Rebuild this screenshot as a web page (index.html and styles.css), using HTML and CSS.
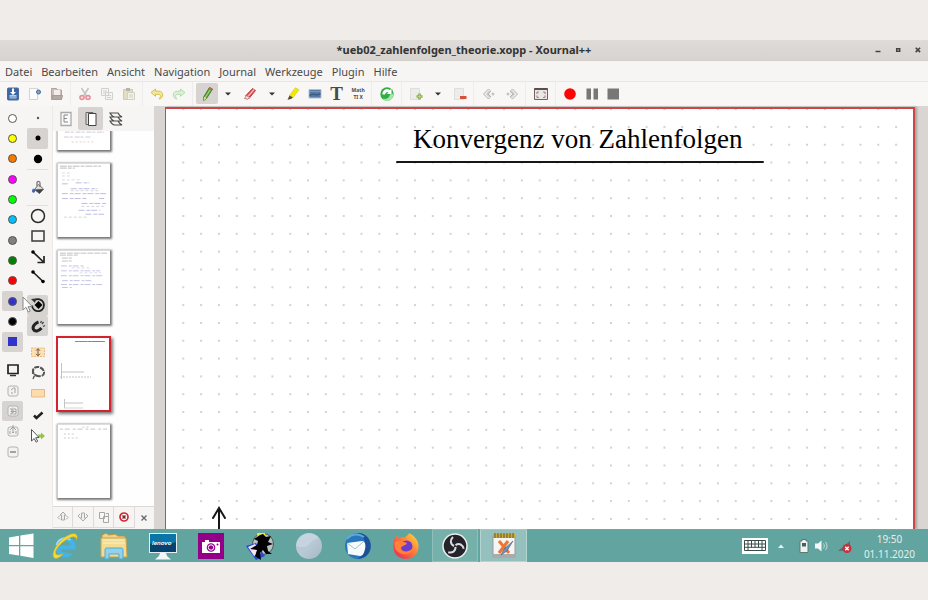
FILE: index.html
```html
<!DOCTYPE html>
<html lang="de">
<head>
<meta charset="utf-8">
<title>ueb02_zahlenfolgen_theorie.xopp - Xournal++</title>
<link rel="stylesheet" href="styles.css">
</head>
<body>
<main class="desktop">
<section class="window">
  <header class="titlebar">
    <h2 class="title">*ueb02_zahlenfolgen_theorie.xopp - Xournal++</h2>
    <div class="winbtns">
      <button aria-label="Minimieren"><svg width="8" height="8"><path d="M1.500 5.500h5" stroke="#444" stroke-width="1.500"/></svg></button>
      <button aria-label="Maximieren"><svg width="8" height="8"><path d="M2.700 2.700h3v2.600h-3z" fill="none" stroke="#444" stroke-width="1.500"/></svg></button>
      <button aria-label="Schließen"><svg width="8" height="8"><path d="M1.700 1.700l4.400 4.400M6.100 1.700L1.700 6.100" stroke="#444" stroke-width="1.600"/></svg></button>
    </div>
  </header>
  <nav class="menubar">
    <button>Datei</button><button>Bearbeiten</button><button>Ansicht</button><button>Navigation</button><button>Journal</button><button>Werkzeuge</button><button>Plugin</button><button>Hilfe</button>
  </nav>
  <div class="toolbar">
    <div class="group g3">
      <button aria-label="Speichern"><svg width="16" height="16"><rect x="2.500" y="2" width="11" height="12" rx="1" fill="#3b66a8" stroke="#4a6b9f"/><path d="M4.500 9h7v3.500h-7z" fill="#b9cbe5"/><path d="M7 2.500h2V6h2L8 9 5 6h2z" fill="#fff"/><path d="M4.500 11h7" stroke="#6d8fc0"/></svg></button>
      <button aria-label="Neu"><svg width="16" height="16"><path d="M2.500 2.500h8v11h-8z" fill="#fdfdfd" stroke="#d3d3d1"/><circle cx="11.500" cy="6" r="2" fill="#7ea3cb" stroke="#456a95"/></svg></button>
      <button aria-label="Öffnen"><svg width="16" height="16"><path d="M2.500 13.500v-11h5l1 1.500h4v9.500z" fill="#d2bdb0" stroke="#b8a196"/><path d="M5 4h6v5H5z" fill="#eee"/><path d="M3.500 9.500h10l-1 4H3z" fill="#b5aaa3" stroke="#a89b93"/></svg></button>
    </div>
    <div class="group g3">
      <button aria-label="Ausschneiden"><svg width="16" height="16"><path d="M4.500 2l5 8M11.500 2l-5 8" stroke="#c4c4c4" stroke-width="1.500"/><g fill="none" stroke="#e8919a" stroke-width="1.700"><ellipse cx="5" cy="11.500" rx="2" ry="1.800"/><ellipse cx="11" cy="11.500" rx="2" ry="1.800"/></g></svg></button>
      <button aria-label="Kopieren"><svg width="16" height="16" fill="#f4f4f3" stroke="#d0d0ce"><path d="M2.500 2.500h7v7h-7zM6.500 6.500h7v7h-7z"/><path d="M4 5h4M4 7h2M8 9.500h4M8 11.500h4"/></svg></button>
      <button aria-label="Einfügen"><svg width="16" height="16"><path d="M2.500 3.500h9v10h-9z" fill="#e2ddc4" stroke="#d0cab2"/><path d="M5 2h4v3H5z" fill="#b5b5b0"/><path d="M6.500 6.500h7v7h-7z" fill="#f2f3ec" stroke="#cdd3bf"/><path d="M8 9h4M8 11h4" stroke="#cbd3bd"/></svg></button>
    </div>
    <div class="group g2">
      <button aria-label="Rückgängig"><svg width="16" height="16"><path d="M2 6.500L6.500 3v2.200H10c5 0 5 7.300 0 7.800 2-2 2-4.600-.500-4.700h-3v2z" fill="#f7e98f" stroke="#d9bd50"/></svg></button>
      <button aria-label="Wiederholen"><svg width="16" height="16"><path d="M14 6.500L9.500 3v2.200H6c-5 0-5 7.300 0 7.800-2-2-2-4.600.500-4.700h3v2z" fill="#dcf0d6" stroke="#b4dbad"/></svg></button>
    </div>
    <div class="group g8">
      <button class="on" aria-label="Stift"><svg width="16" height="16"><path d="M10.500 1.500l3 1.500-6 9.500-3 2 .300-3.700z" fill="#62ad3e" stroke="#417d2a"/><path d="M12 2.500L6 12" stroke="#a6db85"/><path d="M5 10.700l2.500 1.500-3 2.300z" fill="#efd2a5"/><path d="M10.500 1.500l3 1.500-1 1.500-3-1.500z" fill="#d95d50"/></svg></button>
      <button aria-label="Stiftoptionen"><svg width="16" height="16"><path d="M5 6.500h6L8 9.500z" fill="#333"/></svg></button>
      <button aria-label="Radierer"><svg width="16" height="16"><path d="M10.500 2.500l3 2-6.500 8-3.500-2.500z" fill="#d94444" stroke="#bf4444"/><path d="M12 3.500l-7 8" stroke="#f6b4b4" stroke-width="1.500"/><path d="M4.500 9.500l3 2-1.500 1.700-3.500-.700z" fill="#eee" stroke="#c77"/></svg></button>
      <button aria-label="Radiereroptionen"><svg width="16" height="16"><path d="M5 6.500h6L8 9.500z" fill="#333"/></svg></button>
      <button aria-label="Textmarker"><svg width="16" height="16"><path d="M10.500 1.800l3.300 2L8 11.500 4.500 9.500z" fill="#f5e900" stroke="#e2d51e"/><path d="M4.500 9.500L8 11.500l-2 1.600-3.500.700z" fill="#554e32"/></svg></button>
      <button aria-label="Bild"><svg width="16" height="16"><path d="M2 3.500h12v8.500H2z" fill="#5578a5" stroke="#b4c0cf"/><path d="M2.500 9.500c4-3 7 1 11-2" stroke="#3d5c85" fill="none" stroke-width="1.500"/><path d="M3 5.500h10" stroke="#7795bc"/></svg></button>
      <button aria-label="Text" class="tglyph">T</button>
      <button aria-label="LaTeX" class="texglyph"><span>Math</span><span>TI X</span></button>
    </div>
    <div class="group g1">
      <button aria-label="Aktualisieren"><svg width="16" height="16"><circle cx="8" cy="8" r="6.700" fill="#2fae45"/><path d="M3.500 8.500a4.500 4.500 0 017-4.500L12.500 3v5H8L9.500 6A3 3 0 006 8.500z" fill="#fff"/><path d="M13.700 7.500a5.500 5.500 0 01-9.700 5c4 1.500 6.500-1 7-4z" fill="#a5e6aa"/></svg></button>
    </div>
    <div class="group gp">
      <button aria-label="Seite einfügen"><svg width="16" height="16"><path d="M2.500 2.500h9v11h-9z" fill="#ececeb" stroke="#dededc"/><path d="M11.500 7.500v6M8.500 10.500h6" stroke="#86a94f" stroke-width="2.600"/><path d="M11.500 8.500v4M9.500 10.500h4" stroke="#b9d57d"/></svg></button>
      <button aria-label="Seitenoptionen"><svg width="16" height="16"><path d="M5 6.500h6L8 9.500z" fill="#333"/></svg></button>
      <button aria-label="Seite löschen"><svg width="16" height="16"><path d="M2.500 2.500h9v11h-9z" fill="#ececeb" stroke="#dededc"/><path d="M8 11.500h6.500" stroke="#d6503c" stroke-width="3"/></svg></button>
    </div>
    <div class="group gn">
      <button aria-label="Zurück"><svg width="16" height="16"><path d="M7.500 3l-5 5 5 5 1.500-1.500L5.700 8 9 4.500zM10 5L7 8l3 3" fill="#eee" stroke="#b5b4b2"/><circle cx="12" cy="8" r="1" fill="#eee" stroke="#b5b4b2"/></svg></button>
      <button aria-label="Vor"><svg width="16" height="16"><path d="M8.500 3l5 5-5 5L7 11.500 10.300 8 7 4.500zM6 5l3 3-3 3" fill="#eee" stroke="#b5b4b2"/><circle cx="4" cy="8" r="1" fill="#eee" stroke="#b5b4b2"/></svg></button>
    </div>
    <div class="group g1">
      <button aria-label="Vollbild"><svg width="16" height="16"><path d="M1.500 2.500h13v11h-13z" fill="#eae7e4" stroke="#6c6663"/><path d="M1.500 3h13" stroke="#554f4d" stroke-width="2"/><path d="M4 6h2M4 6v2M10 6h2M12 6v2M4 11.500V9.500M4 11.500h2M12 11.500V9.500M12 11.500h-2" stroke="#b5837e" stroke-width="1.200"/></svg></button>
    </div>
    <div class="group gr">
      <button aria-label="Aufnehmen"><svg width="16" height="16"><circle cx="8" cy="8" r="5.800" fill="#fb0505"/></svg></button>
      <button aria-label="Pause"><svg width="16" height="16"><path d="M2.500 2.500H7v11H2.500zM9.500 2.500H14v11H9.500z" fill="#777"/></svg></button>
      <button aria-label="Stopp"><svg width="16" height="16"><path d="M2.500 2.500h11.500v11H2.500z" fill="#777"/></svg></button>
    </div>
  </div>
  <div class="workspace">
    <div class="rail">
      <div class="stack r12">
        <button class="sw white" aria-label="Weiß"><i></i></button>
        <button class="sw yellow" aria-label="Gelb"><i></i></button>
        <button class="sw orange" aria-label="Orange"><i></i></button>
        <button class="sw magenta" aria-label="Magenta"><i></i></button>
        <button class="sw lime" aria-label="Hellgrün"><i></i></button>
        <button class="sw sky" aria-label="Hellblau"><i></i></button>
        <button class="sw gray" aria-label="Grau"><i></i></button>
        <button class="sw green" aria-label="Grün"><i></i></button>
        <button class="sw red" aria-label="Rot"><i></i></button>
        <button class="sw blue on" aria-label="Blau"><i></i></button>
        <button class="sw black" aria-label="Schwarz"><i></i></button>
        <button class="sw blue square on" aria-label="Farbe wählen"><i></i></button>
      </div>
      <div class="stack r5">
        <button aria-label="Bildschirm"><svg width="16" height="16"><path d="M3 3h10v8.500H3z" fill="#f4f4f3" stroke="#222" stroke-width="1.700"/><path d="M5 13.500h6" stroke="#333" stroke-width="1.500"/></svg></button>
        <button aria-label="Seite 1"><svg class="faint" width="16" height="16"><rect x="3" y="3" width="10" height="10" rx="2"/><path d="M6 7l2.500-2H10v5M6 10h2"/></svg></button>
        <button class="on" aria-label="Doppelseite"><svg class="faint" width="16" height="16"><rect x="3" y="3" width="10" height="10" rx="2"/><path d="M5 6h2v5H5M9 6h2v5H9M8 4.500v7M5.500 8.500H11"/></svg></button>
        <button aria-label="Anordnung"><svg class="faint" width="16" height="16"><rect x="3" y="4" width="10" height="9" rx="2"/><path d="M8 2v8M5 7l3-3 3 3M5 8v3M11 8v3M7 9.500h2"/></svg></button>
        <button aria-label="Zeile"><svg class="faint" width="16" height="16"><rect x="3" y="3" width="10" height="10" rx="2"/><path d="M5 8h6" stroke-width="2"/></svg></button>
      </div>
    </div>
    <div class="rail tools">
      <div class="stack r3">
        <button aria-label="Fein"><svg width="16" height="16"><circle cx="8" cy="8" r="1.200" fill="#555"/></svg></button>
        <button class="on" aria-label="Mittel"><svg width="16" height="16"><circle cx="8" cy="8" r="2.500"/></svg></button>
        <button aria-label="Dick"><svg width="16" height="16"><circle cx="8" cy="8" r="4.200"/></svg></button>
      </div>
      <div class="stack fillbox">
        <button aria-label="Füllen"><svg width="16" height="16"><path d="M8.500 4.500l5 4.500-4 4.500-5-4z" fill="#ddd" stroke="#666"/><path d="M4.500 9.500l9-.500-4 4.500z" fill="#444"/><path d="M7 6V3c0-2.500 3-2 3 0v4" fill="none" stroke="#777" stroke-width="1.300"/><path d="M3 8.500c-3.500 5 3.500 6 2 1z" fill="#4068b5"/></svg></button>
      </div>
      <div class="stack r4">
        <button aria-label="Ellipse"><svg width="16" height="16"><circle cx="8" cy="8" r="6.500" fill="none" stroke="#2b2b2b" stroke-width="1.500"/></svg></button>
        <button aria-label="Rechteck"><svg width="16" height="16"><path d="M2 3h12v10H2z" fill="none" stroke="#3a3a3a" stroke-width="1.500"/></svg></button>
        <button aria-label="Pfeil"><svg width="16" height="16"><path d="M3 3l10.500 10M14 7v6.500H7.500" fill="none" stroke="#222" stroke-width="1.700"/><circle cx="3" cy="3" r="1.800"/></svg></button>
        <button aria-label="Linie"><svg width="16" height="16"><path d="M3 3l10 9.500" stroke="#222" stroke-width="1.700"/><circle cx="3" cy="3" r="1.800"/><circle cx="13" cy="12.500" r="1.800"/></svg></button>
      </div>
      <div class="stack r2">
        <button class="on" aria-label="Drehung einrasten"><svg width="16" height="16"><path d="M4.500 3.300A6 6 0 112 8.500" fill="none" stroke="#222" stroke-width="1.800"/><path d="M1 2l5-.500L5 6z" fill="#333"/><path d="M8.500 4l4 4-4 4-4-4z"/></svg></button>
        <button class="on" aria-label="Am Gitter einrasten"><svg width="16" height="16"><path d="M8.500 4C5 5 2 9 3.500 11.500s5 2 8-1.500" fill="none" stroke="#222" stroke-width="3"/><path d="M10.500 5l1-2M13 8.500l2-1M13.500 4L12 6" stroke="#444" stroke-width="1.300"/></svg></button>
      </div>
      <div class="stack r3 tight">
        <button aria-label="Vertikaler Abstand"><svg width="16" height="16"><path d="M1.500 4h13v8.500h-13z" fill="#fbe0b3" stroke="#e8b886" stroke-dasharray="2 1"/><path d="M8 5v6.500M6 6.700L8 4.700l2 2M6 9.800l2 2 2-2" fill="none" stroke="#6e5534"/></svg></button>
        <button aria-label="Lasso"><svg width="16" height="16"><path d="M3.500 9.500C1.500 5 5 2.500 8.500 3s7 4 5 7.500c-1.500 2-5 2-7.500 1" fill="none" stroke="#555" stroke-width="2" stroke-dasharray="5 1"/><path d="M2 9l4 2-2 1.500-1 2.500" fill="none" stroke="#555" stroke-width="1.300"/></svg></button>
        <button aria-label="Rechteck auswählen"><svg width="16" height="16"><path d="M1.500 4.500h13v7.500h-13z" fill="#fbdcaa" stroke="#e9b98a"/></svg></button>
      </div>
      <div class="stack r2 last">
        <button aria-label="Standard"><svg width="16" height="16"><path d="M4 8.500l2.500 2.500L12.500 5.500" fill="none" stroke="#222" stroke-width="2.600"/></svg></button>
        <button aria-label="Objekt auswählen"><svg width="16" height="16"><path d="M8 6.500h3V4.500l4 3.500-4 3.500v-2H8z" fill="#96c544"/><path d="M1.500 1.500v11.500l2.700-2.500 2 3.700 1.500-1-2-3.500 3.300-.200z" fill="#fff" stroke="#555"/></svg></button>
      </div>
    </div>
    <aside class="sidebar">
      <div class="tabs">
        <button aria-label="Inhalt"><svg width="18" height="18"><path d="M4 2.500h10v13H4z" fill="#fafafa" stroke="#aaa" stroke-width="1.300"/><path d="M7 5h4M7 5v7h4M7 8.500h3" fill="none" stroke="#888"/></svg></button>
        <button class="on" aria-label="Seitenvorschau"><svg width="18" height="18"><path d="M4 2.500h7v12H4z" fill="#ddd" stroke="#666"/><path d="M6.500 3.500h7.500v12H6.500z" fill="#fff" stroke="#444"/></svg></button>
        <button aria-label="Ebenen"><svg width="18" height="18" fill="#f4f4f3" stroke="#4c4c4c" stroke-width="1.200"><path d="M3 11h8c1 2 2 3 4 4H7c-2-1-3-2-4-4zM3 7h8c1 2 2 3 4 4H7c-2-1-3-2-4-4zM3 3h8c1 2 2 3 4 4H7c-2-1-3-2-4-4z"/></svg></button>
      </div>
      <div class="thumbs">
        <div class="thumb"><svg viewBox="0 0 53 74"><g fill="none" stroke="#cbcbd3" stroke-width="1"><path stroke-dasharray="5 1 3 2" d="M7 56h40M6 61h28"/><path stroke="#e0cdd0" stroke-dasharray="2 2" d="M14 66h22"/></g></svg></div>
        <div class="thumb"><svg viewBox="0 0 53 74"><g fill="none" stroke-width="1"><path stroke="#bbbbbd" stroke-dasharray="7 1 4 1" d="M2 2h42M2 4h15"/><path stroke="#dadade" stroke-dasharray="3 2" d="M4 9h8M4 12h9M4 16h18"/><path stroke="#bcbce0" stroke-dasharray="6 2 4 1" d="M4 20h8M18 19h14M13 25h27M4 30h45M4 35h26M42 35h5M24 40h25M21 47h22M28 51h20"/><path stroke="#d3d3de" stroke-dasharray="3 2" d="M13 27h30M24 43h23M6 54h25"/></g></svg></div>
        <div class="thumb"><svg viewBox="0 0 53 74"><g fill="none" stroke-width="1"><path stroke="#c0c0c2" stroke-dasharray="6 1" d="M2 2h48M2 4h18M4 7h10M4 10h10"/><path stroke="#c3c3e4" stroke-dasharray="6 2 3 1" d="M3 15h24M3 20h40M3 25h43M4 30h32M3 34h43M4 37h10"/><path stroke="#d9d9ee" stroke-dasharray="3 2" d="M14 17h18M22 22h22"/></g></svg></div>
        <div class="thumb current"><svg viewBox="0 0 53 74"><text x="18" y="5" font-size="2" font-weight="bold">Konvergenz von Zahlenfolgen</text><g fill="none" stroke="#c3c3c3"><path d="M4.500 26v16M4 35h23M7 66h19M7.500 62v9"/><path stroke-dasharray="2 1" d="M3 40h31"/><path d="M7 71h19" stroke="#d5d5d5"/></g></svg></div>
        <div class="thumb"><svg viewBox="0 0 53 74"><g fill="none" stroke="#c6c6c6"><path stroke-dasharray="3 2 5 3" d="M2 4h48"/><path stroke="#ccc" stroke-dasharray="2 2" d="M25 2h8M6 9h11M6 13h15"/></g></svg></div>
      </div>
      <div class="pagebtns">
        <button aria-label="Seite nach oben"><svg width="14" height="14"><path d="M7 2l3 3H8.500v5h-3V5H4zM2 7.500L4 5.500M2 7.500l2 2M12 7.500l-2-2M12 7.500l-2 2" fill="#eee" stroke="#aaa"/></svg></button>
        <button aria-label="Seite nach unten"><svg width="14" height="14"><path d="M7 11l3-3H8.500V3h-3v5H4zM2 6l2-2M2 6l2 2M12 6l-2-2M12 6l-2 2" fill="#eee" stroke="#aaa"/></svg></button>
        <button aria-label="Seite kopieren"><svg width="14" height="14"><path d="M2.500 2.500h5v6h-5zM6.500 6.500h5v6h-5zM9 3.500h2.500v3" fill="#f7f7f6" stroke="#a5a5a5"/></svg></button>
        <button aria-label="Seite löschen"><svg width="14" height="14"><circle cx="7" cy="7" r="4" fill="#fff" stroke="#d32833" stroke-width="1.700"/><path d="M5.500 5.500l3 3M8.500 5.500l-3 3" stroke="#7d222a" stroke-width="1.500"/></svg></button>
        <button class="close" aria-label="Seitenleiste schließen"><svg width="14" height="14"><path d="M4.500 4.500l5 5M9.500 4.500l-5 5" stroke="#666" stroke-width="1.300"/></svg></button>
      </div>
    </aside>
    <div class="canvas">
      <article class="page">
        <svg class="ink" width="100%" height="100%">
          <defs><pattern id="dots" x="8.400" y="9" width="17.820" height="17.820" patternUnits="userSpaceOnUse"><circle cx="8.900" cy="8.900" r=".900" fill="#bdbdbd"/></pattern></defs>
          <rect x="9" width="100%" height="100%" fill="url(#dots)"/>
          <g fill="none" stroke="#161616" stroke-width="2" stroke-linecap="round"><path d="M231 53h366"/><path d="M53 425v-25M47 409l6-10 6 10"/></g>
        </svg>
        <h1>Konvergenz von Zahlenfolgen</h1>
      </article>
    </div>
    <svg class="pointer" width="14" height="18"><path d="M1 1v13l3-2.700 2.200 4.700 2-1-2.200-4.300 4-.300z" fill="#fff" stroke="#888"/></svg>
  </div>
</section>
<footer class="taskbar">
  <button class="start" aria-label="Start"><svg width="26" height="26" fill="#fff"><path d="M1 4.500l10-1.700V12H1zM12.300 2.600L25.500.500V12H12.300zM1 13.300h10v9.300L1 21zM12.300 13.300h13.200V25l-13.200-2.200z"/></svg></button>
  <div class="apps">
    <button aria-label="Internet Explorer"><svg width="28" height="28"><circle cx="14.500" cy="15" r="8" fill="none" stroke="#45b4e8" stroke-width="4.500"/><path d="M9 13.500h15v4H9z" fill="#45b4e8"/><path d="M16 17.700h11v3.800H16z" fill="#62a49f"/><path d="M5.500 13c1.500-6 9-9 14-5" fill="none" stroke="#a5e0f8" stroke-width="1.500"/><path d="M3.500 26C-1.500 22 8 7 18 3c5-2.500 10-1.500 7.500 5 0-3.500-3-4-7-2C9 10.500 2 20 5.500 22.500c2 1 5 0 7-1C9 25.500 5 27.500 3.500 26z" fill="#f8d832" stroke="#d0ad22" stroke-width=".500"/></svg></button>
    <button aria-label="Explorer"><svg width="28" height="28"><path d="M2 3l4-2 3 2 6-1 3 2 7 0v4H2z" fill="#eed28a" stroke="#b79348"/><path d="M1 6h25l1 19H1z" fill="#f2dc92" stroke="#c2a556"/><path d="M3 8h21M3 11h22" stroke="#fff0bd"/><path d="M5 27v-9c0-2 1-2 2-2h14c2 0 2 1 2 2v9h-4v-5H9v5z" fill="#8fd2ed" stroke="#5aa7ca"/></svg></button>
    <button aria-label="Lenovo"><svg width="28" height="28"><path d="M0 1h28v20H0z" fill="#e6eef2"/><path d="M1 2h26v18H1z" fill="#0b75a8"/><path d="M1 12c8-5 17 3 26-2v10H1z" fill="#07436e"/><text x="3" y="13" font-family="Liberation Sans" font-style="italic" font-weight="bold" font-size="6" fill="#fff">lenovo</text><path d="M11 21h6l1 3 4 3.500H6l4-3.500z" fill="#f4f7f8"/></svg></button>
    <button aria-label="Kamera"><svg width="28" height="28"><path d="M1 1h26v26H1z" fill="#930087"/><path d="M5 10h3V8h4v2h11v11H5z" fill="#fff"/><circle cx="14" cy="15.500" r="4.300" fill="#930087"/><circle cx="14" cy="15.500" r="2.700" fill="none" stroke="#fff"/><circle cx="20.500" cy="12.500" r="1" fill="#930087"/></svg></button>
    <button aria-label="Paint"><svg width="30" height="28"><circle cx="18" cy="12" r="10.500" fill="#b8c3c4" stroke="#555"/><path d="M12 1l8 0 1 7-8 1z" fill="#f4e834"/><path d="M1 14l10-3 9 13-9 4z" fill="#2548d6"/><path d="M3 15l7-3 6 9-7 3z" fill="#f4e2ef"/><path d="M15 3l3-1 3 3 5-1-3 6 5 2-6 2 1 5 4 3-6 0-3-4-3 3 1 7-6-4 2-6-7-1 7-4 1-4-4-2z"/></svg></button>
    <button aria-label="Kugel"><svg width="28" height="28"><defs><linearGradient id="pearl" x2="1" y2="1"><stop stop-color="#b5c9d8"/><stop offset=".500" stop-color="#b9c9d6"/><stop offset="1" stop-color="#a4b6c7"/></linearGradient></defs><circle cx="14" cy="14" r="13" fill="url(#pearl)"/><path d="M1 14a13 13 0 0123-8c-7 1-9 6-12 8s-7 1-11 0z" fill="#d3dfe7" opacity=".500"/></svg></button>
    <button aria-label="Thunderbird"><svg width="30" height="28"><circle cx="15" cy="14" r="13" fill="#2a76bd"/><path d="M15 1c12 0 17 15 8 23-3 2-7 3-9 3 6-3 8-8 8-15 0-5-3-8-7-11z" fill="#1d5195"/><path d="M4 11l15-2c3 0 4 4 3 8s-2 7-5 7L5 22z" fill="#f7fafc"/><path d="M4 11l8 6 8-7" fill="none" stroke="#a9bcca"/><path d="M4 7c4-5 11-6 17-2" stroke="#5da9e3" stroke-width="2" fill="none"/></svg></button>
    <button aria-label="Firefox"><svg width="28" height="28"><defs><linearGradient id="fire" x1="1" x2="0" y2="1"><stop stop-color="#ffe43e"/><stop offset=".500" stop-color="#ff7139"/><stop offset="1" stop-color="#e61e65"/></linearGradient></defs><path d="M2 8l3-5 2 4c2-2 5-2 6-1 1-3 4-3 4-5 6 3 10 8 9.500 14C26 23 20 27 14 27S2 23 1.500 16C1 12 2 11 2 8z" fill="url(#fire)"/><circle cx="14.500" cy="14.500" r="6" fill="#6c3ccd"/><path d="M3 10c5-3 7 0 9 0l3 1c-1 3-5 2-6 5 0 4 8 5 12 0-1 6-8 8-13 5-5-2-6-7-5-11z" fill="#ff8238"/></svg></button>
    <button class="running" aria-label="OBS"><svg width="28" height="28"><circle cx="14" cy="14" r="12" fill="#24222a" stroke="#edf0f0" stroke-width="1.500"/><g fill="none" stroke="#dcdcdf" stroke-width="2"><path d="M13 14c-4-2-4-6-1-9"/><path d="M13 14c-4-2-4-6-1-9" transform="rotate(120 14 14)"/><path d="M13 14c-4-2-4-6-1-9" transform="rotate(240 14 14)"/></g></svg></button>
    <button class="running active" aria-label="Xournal++"><svg width="28" height="28"><path d="M3 4h22v21H3z" fill="#f5f5f3" stroke="#999"/><path d="M3 22h22v4H3z" fill="#aaa"/><path d="M3 2h22v4H3z" fill="#cba83b"/><path d="M5 1v5M8 1v5M11 1v5M14 1v5M17 1v5M20 1v5M23 1v5" stroke="#625a31"/><path d="M9 9l10 12M18 9L9 21" stroke="#f07432" stroke-width="3"/><path d="M23 9l-9 8-3 6 6-4z" fill="#6f91b5" stroke="#49647f" stroke-width=".600"/></svg></button>
  </div>
  <div class="tray">
    <button aria-label="Tastatur"><svg width="28" height="18"><path d="M1 1h26v16H1z" fill="#fff"/><path d="M3.500 3.500h21v10h-21zM3.500 7h21M3.500 10.300h21M7 3.500v10M10.500 3.500v7M14 3.500v7M17.500 3.500v7M21 3.500v10" fill="none" stroke="#3a4b4a"/></svg></button>
    <button class="up" aria-label="Ausgeblendete Symbole"><svg width="8" height="6"><path d="M1 5l3-3.500L7 5z" fill="#e9f4f2"/></svg></button>
    <button aria-label="Akku"><svg width="10" height="16"><path d="M3 1.500h4v1.500h2v11.500H1V3h2z" fill="#eef3f2" stroke="#5e7a77"/><path d="M3 5h4v3.500H3z" fill="#46605e"/></svg></button>
    <button class="vol" aria-label="Lautstärke"><svg width="16" height="14"><path d="M1 4.500h3l3.500-3v11L4 9.500H1z" fill="#f4f8f7"/><path d="M9.500 4.500c1 1.500 1 3.500 0 5M11.500 3c2 2.500 2 5.500 0 8" fill="none" stroke="#c3dcd9"/></svg></button>
    <button class="net" aria-label="Netzwerk"><svg width="16" height="16"><path d="M1 13L13 3v10z" fill="#58716e"/><circle cx="10" cy="10.500" r="4.500" fill="#c8303c"/><path d="M8.300 8.800l3.400 3.400M11.700 8.800l-3.400 3.400" stroke="#fff" stroke-width="1.500"/></svg></button>
    <time class="clock"><span>19:50</span><span>01.11.2020</span></time>
  </div>
</footer>
</main>
</body>
</html>
```
FILE: styles.css
```css
* { box-sizing: border-box; }

body {
  margin: 0;
  background: #f0ece9;
  font-family: "Noto Sans", "Open Sans", sans-serif;
  color: #4a4a4a;
}

button {
  margin: 0;
  padding: 0;
  border: 0;
  background: none;
  color: inherit;
  font: inherit;
  display: flex;
  align-items: center;
  justify-content: center;
}

svg { display: block; flex: none; }

.desktop {
  height: 100vh;
  padding: 40px 0 38px;
  display: flex;
  flex-direction: column;
}

.window {
  flex: 1;
  min-height: 0;
  display: flex;
  flex-direction: column;
  background: #f6f5f3;
}

.titlebar {
  display: grid;
  grid-template-columns: 1fr auto 1fr;
  align-items: center;
  height: 21px;
  background: linear-gradient(#dedbd8, #d7d4d0);
  border-bottom: 1px solid #d3d0cc;
}

.title {
  grid-column: 2;
  margin: 0;
  font-size: 11px;
  line-height: 20px;
  color: #333;
}

.winbtns {
  display: flex;
  justify-content: flex-end;
  gap: 12px;
  padding-right: 6px;
}

.menubar {
  display: flex;
  gap: 9px;
  height: 21px;
  padding: 1px 5px 0;
  font-size: 11px;
  line-height: 20px;
  border-bottom: 1px solid #e9e7e5;
}

.toolbar {
  display: flex;
  height: 24px;
  padding: 0 2px;
  background: #f8f7f5;
}

.group {
  display: flex;
  padding-top: 1px;
}

.group + .group {
  margin-left: 2px;
  padding-left: 3px;
  border-left: 1px solid #efedeb;
}

.group button { flex: 1; height: 21px; }
.g1 { width: 28px; }
.g2 { width: 48px; }
.g3 { width: 70px; }
.g3:first-child { width: 66px; }
.g8 { width: 177px; }
.gp { width: 70px; }
.gn { width: 50px; }
.gr { width: 69px; }

.on { background: #d6d3d0; border-radius: 2px; }

.tglyph {
  font-family: "Liberation Serif", serif;
  font-size: 19px;
  font-weight: bold;
  line-height: 20px;
}

.group .texglyph {
  flex-direction: column;
  font-size: 5px;
  font-weight: bold;
  line-height: 7px;
}

.workspace {
  position: relative;
  flex: 1;
  min-height: 0;
  display: flex;
}

.rail {
  width: 26px;
  padding: 2px 3px 0 2px;
  flex: none;
}
.tools { padding: 2px 4px 0 1px; }

.stack { display: grid; grid-auto-rows: 1fr; }
.stack button { min-height: 0; }
.r12 { height: 244px; }
.r5 { height: 102px; margin-top: 8px; }
.r3 { height: 61px; }
.r4 { height: 81px; }
.r2 { height: 41px; }
.fillbox {
  height: 37px;
  border-top: 1px solid #e2e0de;
  border-bottom: 1px solid #e2e0de;
}
.r2 { margin-top: 8px; }
.tight { margin-top: 6px; }
.last { margin-top: 2px; }

.sw i {
  width: 9px;
  height: 9px;
  border: 1px solid #555;
  border-radius: 50%;
}
.square i { border-radius: 0; border-color: #33c; }
.white i { background: #fff; }
.yellow i { background: #ff0; }
.orange i { background: #f57900; }
.magenta i { background: #f0f; }
.lime i { background: #0f0; }
.sky i { background: #00c0ff; }
.gray i { background: #808080; }
.green i { background: #008000; }
.red i { background: #f00; }
.blue i { background: #33c; }
.black i { background: #000; }

.faint rect { fill: #f3f2f1; stroke: #b3b2b0; }
.faint path { fill: none; stroke: #a3a2a0; }

.sidebar {
  width: 102px;
  flex: none;
  display: flex;
  flex-direction: column;
  min-height: 0;
  border-left: 1px solid #eceae8;
}

.tabs {
  display: flex;
  height: 25px;
  padding: 1px 0;
}
.tabs button { width: 25px; }

.thumbs {
  flex: 1;
  min-height: 0;
  display: flex;
  flex-direction: column;
  justify-content: flex-end;
  gap: 13px;
  padding: 0 0 8px 4px;
  overflow: hidden;
  background: #fefefe;
  border-bottom: 1px solid #dcdad8;
}

.thumb {
  width: 53px;
  height: 74px;
  flex: none;
  background: #fff;
  border-top: 1px solid #ddd;
  border-left: 1px solid #ccc;
  box-shadow: 1px 1px 2px 1px #777;
}
.thumb.current {
  border: 0;
  outline: 2px solid #d2232f;
  outline-offset: -1px;
  box-shadow: 2px 2px 3px 1px #777;
}
.thumb svg { width: 100%; height: 100%; }

.pagebtns {
  display: flex;
  height: 22px;
}
.pagebtns button {
  flex: 1;
  height: 21px;
  border: 1px solid #dddbd9;
  border-top: 0;
  border-left: 0;
}
.pagebtns .close { border: 0; }

.canvas {
  flex: 1;
  min-width: 0;
  display: flex;
  padding: 1px 13px 0 11px;
  background: #d8d5d2;
}

.page {
  position: relative;
  flex: 1;
  overflow: hidden;
  background: #fff;
  border: 2px solid #cb4549;
  border-left-width: 1px;
  border-bottom: 0;
  box-shadow: 2px 0 2px #a5a2a0;
}

.ink { position: absolute; inset: 0; }

.page h1 {
  position: absolute;
  top: 14px;
  left: 247px;
  margin: 0;
  font-family: "Liberation Serif", serif;
  font-size: 27px;
  font-weight: normal;
  line-height: 32px;
  white-space: nowrap;
  color: #000;
}

.pointer { position: absolute; left: 22px; top: 190px; }

.taskbar {
  display: flex;
  height: 33px;
  flex: none;
  background: #62a49f;
  color: #fff;
}

.start { width: 41px; }

.apps {
  width: 487px;
  display: grid;
  grid-template-columns: repeat(10, 1fr);
}

.running {
  margin: 0 1px;
  background: #75b0ab;
  border: 1px solid #8dbfbb;
}
.running.active { background: #94c1be; border-color: #b4d5d2; }

.tray {
  margin-left: auto;
  padding-right: 13px;
  display: flex;
  align-items: center;
}
.up { margin: 0 14px 0 8px; }
.vol { margin-left: 5px; }
.net { margin: 0 11px 0 7px; }

.clock {
  display: flex;
  flex-direction: column;
  align-items: center;
  padding-top: 2px;
  font-size: 10px;
  line-height: 15px;
  color: #e3f0ee;
}
```
